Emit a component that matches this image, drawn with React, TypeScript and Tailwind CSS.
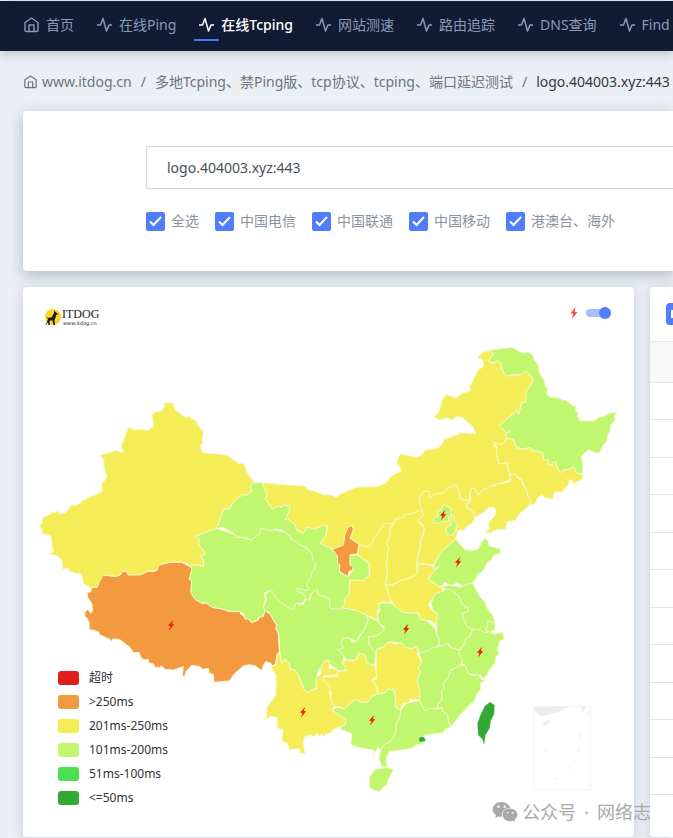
import { FaWeixin } from "react-icons/fa";

const YELLOW = "#f5ed58";
const LIME = "#c0f76e";
const ORANGE = "#f3993f";
const GREEN = "#31a932";

const navItems = ["在线Ping", "在线Tcping", "网站测速", "路由追踪", "DNS查询", "Find"];
const carriers = ["全选", "中国电信", "中国联通", "中国移动", "港澳台、海外"];

const legend = [
  { label: "超时", color: "bg-[#e21e1b]" },
  { label: ">250ms", color: "bg-[#f3993f]" },
  { label: "201ms-250ms", color: "bg-[#f5ed58]" },
  { label: "101ms-200ms", color: "bg-[#c0f76e]" },
  { label: "51ms-100ms", color: "bg-[#4be04f]" },
  { label: "<=50ms", color: "bg-[#31a932]" },
];

type Province = { name: string; fill: string; points: string };

const west: Province[] = [
  {
    name: "xinjiang",
    fill: YELLOW,
    points:
      "402,38 431,38 428,47 434,52 436,60 448,68 455,76 468,82 478,80 487,88 497,90 505,108 518,122 520,135 516,147 520,157 511,168 516,187 540,190 590,195 625,220 641,220 655,255 672,275 661,288 667,300 655,315 637,315 610,335 600,356 580,358 570,390 560,415 497,438 508,446 506,462 527,492 512,500 521,513 521,530 494,524 483,530 470,520 455,517 430,516 395,523 383,540 350,545 328,556 298,556 290,545 278,545 262,560 220,556 205,590 180,594 160,580 155,552 135,550 120,542 110,534 98,538 96,510 80,497 57,492 70,485 70,475 66,470 64,440 48,432 38,434 36,418 27,406 38,400 38,383 65,370 65,365 78,368 86,360 88,372 107,368 122,346 143,345 157,332 215,305 216,278 224,272 230,262 222,230 221,207 209,197 258,181 270,186 280,186 274,168 295,111 313,118 342,118 350,123 368,112 369,95 366,75 373,66 395,62 404,50",
  },
];

const northEast: Province[] = [
  {
    name: "neimenggu",
    fill: YELLOW,
    points:
      "-473,458 -410,464 -345,468 -335,480 -320,482 -290,494 -268,494 -253,503 -235,490 -188,471 -128,470 -102,458 -85,438 -56,422 -70,398 -59,371 -10,382 5,375 15,360 50,356 65,345 72,327 97,322 97,317 108,316 122,308 152,310 168,311 160,292 126,262 108,260 96,271 80,264 52,270 43,258 55,250 65,215 77,193 107,204 126,190 151,182 149,170 160,150 173,122 191,108 188,88 172,84 190,66 211,60 220,72 205,92 222,100 232,92 243,98 245,115 257,138 300,134 315,124 322,126 340,147 330,170 318,185 316,216 305,218 296,255 291,242 239,286 258,308 270,300 272,310 260,314 260,328 246,344 222,338 222,348 230,350 232,385 237,402 260,395 262,412 270,433 270,450 248,458 235,460 212,468 175,496 165,478 155,474 150,490 148,512 122,508 80,520 5,560 -80,640 -165,660 -200,640 -229,656 -263,656 -295,645 -300,630 -282,615 -278,590 -315,595 -340,595 -350,610 -368,600 -375,585 -405,568 -392,545 -395,528 -415,530 -442,538 -465,505 -458,495",
  },
  {
    name: "heilongjiang",
    fill: LIME,
    points:
      "211,60 275,52 310,70 325,66 340,78 344,92 355,105 356,120 365,140 375,155 376,168 383,178 380,190 390,202 415,203 428,210 437,210 460,228 470,232 466,242 475,250 473,260 482,273 525,272 535,262 555,257 570,249 592,246 583,258 586,270 582,275 572,285 570,305 562,320 560,335 550,345 538,370 520,366 505,360 485,378 488,410 487,432 475,432 468,426 462,411 445,418 430,420 422,428 412,415 407,396 399,395 396,406 386,404 385,390 371,388 368,370 355,364 335,362 330,352 310,358 290,353 280,328 260,325 257,312 270,308 271,300 258,308 239,286 291,242 296,255 305,218 316,216 318,185 330,170 340,147 322,126 315,124 308,134 280,134 257,138 245,115 243,98 232,92 222,100 205,92 220,72",
  },
  {
    name: "jilin",
    fill: YELLOW,
    points:
      "260,325 280,328 290,353 310,358 330,352 335,362 355,364 368,370 371,388 385,390 386,404 396,406 399,395 407,396 412,415 422,428 430,420 445,418 462,411 468,426 475,432 487,432 488,445 484,450 464,458 468,470 452,448 448,450 445,465 425,485 402,487 400,508 375,503 365,495 355,502 342,525 330,525 320,480 305,450 285,433 268,432 262,398 237,402 228,370 232,350 220,338 235,340 246,344",
  },
  {
    name: "liaoning",
    fill: YELLOW,
    points:
      "270,433 285,433 297,448 305,445 308,462 320,480 324,500 331,510 330,525 300,550 285,572 262,575 257,598 230,598 210,610 200,608 198,602 208,598 205,580 228,552 228,540 222,532 205,532 195,545 165,562 158,544 138,530 152,512 150,480 158,474 166,480 175,496 185,483 212,468 225,467 230,460 248,462 252,456 265,458 272,450",
  },
  {
    name: "hebei",
    fill: YELLOW,
    points:
      "5,540 -2,520 0,500 10,485 25,483 30,505 45,492 75,488 80,475 95,470 107,464 115,475 122,508 148,512 138,530 158,544 165,565 155,580 140,590 130,602 115,600 108,620 108,630 80,650 55,680 40,705 -10,700 0,655 0,630 12,610 12,590 -5,570 10,555",
  },
  {
    name: "beijing",
    fill: LIME,
    points: "72,523 82,530 95,536 92,545 95,552 86,562 85,575 70,574 60,580 42,578 40,565 55,558 50,545 62,540",
  },
  {
    name: "tianjin",
    fill: LIME,
    points: "92,556 102,558 100,570 110,580 112,590 102,612 90,616 77,608 80,590 92,586 94,572",
  },
];

const middle: Province[] = [
  {
    name: "qinghai",
    fill: LIME,
    points:
      "-70,295 -133,318 -122,326 -124,342 -103,372 -118,380 -109,393 -109,410 -136,404 -153,413 -145,425 -152,435 -152,450 -146,456 -148,490 -138,508 -125,518 -100,520 -85,532 -55,537 -30,545 2,545 10,550 15,568 25,566 35,578 52,570 55,562 70,560 75,542 70,530 76,508 72,490 80,485 95,482 110,510 128,520 140,530 160,540 170,520 185,520 200,505 225,430 225,380 150,310 60,290 30,330",
  },
  {
    name: "gansu",
    fill: LIME,
    points:
      "67,158 82,195 75,205 98,238 115,228 125,232 132,225 148,230 148,245 135,268 150,270 165,285 170,300 190,310 200,292 225,297 250,285 262,288 258,315 240,340 277,358 295,380 300,405 298,425 325,440 340,418 330,405 330,376 352,374 388,400 387,438 370,452 330,450 327,470 330,490 312,508 318,530 300,540 270,535 268,505 250,498 235,495 232,478 215,490 207,512 195,512 196,500 188,490 170,482 172,475 190,480 202,482 207,475 200,468 203,455 215,440 213,428 222,420 228,405 218,390 216,370 200,352 180,345 170,335 150,325 150,318 125,300 110,297 90,302 62,294 60,310 45,322 33,330 18,323 -10,322 -20,308 -30,305 -50,292 -70,295 -60,270 -50,238 -30,236 -20,215 7,195 25,195 37,180 31,168 42,158",
  },
  {
    name: "shaanxi",
    fill: YELLOW,
    points:
      "458,280 450,300 452,318 440,345 446,352 442,380 440,400 442,430 436,465 445,480 448,500 455,518 430,516 416,520 420,530 412,545 412,570 395,562 380,558 350,545 345,538 315,540 305,532 318,520 312,508 330,490 327,470 332,450 370,452 388,438 388,400 352,375 357,342 375,350 392,348 402,325 432,282",
  },
  {
    name: "shanxi",
    fill: YELLOW,
    points:
      "545,240 550,255 535,270 540,282 552,290 550,310 540,330 542,345 535,370 530,400 532,430 515,442 488,450 455,465 436,465 442,440 440,400 445,352 440,340 450,320 450,295 462,280 465,268 490,262 492,255 520,250 532,244",
  },
  {
    name: "henan",
    fill: YELLOW,
    points:
      "436,465 455,465 488,450 515,442 532,430 534,400 580,408 580,417 598,411 582,425 565,445 577,455 590,465 608,475 612,490 590,492 584,506 575,508 565,525 580,545 592,545 592,580 578,582 575,572 560,572 540,568 535,550 490,548 465,530 455,515 445,500 445,485",
  },
  {
    name: "ningxia",
    fill: ORANGE,
    points:
      "325,290 337,287 340,300 330,325 345,335 357,342 352,372 330,374 330,405 340,410 338,420 327,424 325,440 298,424 300,405 293,400 292,378 277,358 311,345 314,315",
  },
];

const southWest: Province[] = [
  {
    name: "xizang",
    fill: ORANGE,
    points:
      "360,80 366,88 357,118 365,122 362,158 375,178 395,190 410,190 425,202 455,207 480,215 512,215 512,222 522,228 525,238 534,236 545,248 565,240 567,232 580,230 585,212 600,222 610,240 620,255 617,265 625,280 628,335 620,345 617,372 605,378 603,370 587,365 578,380 575,392 555,377 535,374 520,378 500,395 490,405 478,423 432,427 430,403 418,400 415,385 398,388 390,380 365,376 348,395 343,412 337,405 340,380 310,390 285,388 278,380 272,378 268,385 262,380 258,386 250,372 235,368 235,358 222,360 212,352 208,338 190,338 180,322 148,298 128,297 124,305 120,298 90,285 85,275 57,268 58,250 52,235 45,230 45,215 54,208 62,220 68,213 65,190 52,170 52,157 62,156 65,142 82,142 88,125 100,105 138,110 150,105 158,94 168,94 175,105 210,105 235,94 250,95 262,90 265,76 300,67 335,67",
  },
];

const south: Province[] = [
  {
    name: "sichuan",
    fill: LIME,
    points:
      "45,32 40,20 50,0 46,-18 55,-25 65,-28 78,-5 98,10 110,20 130,30 138,10 160,15 165,0 180,0 185,-20 202,-32 205,-15 238,-5 240,25 270,28 285,25 315,30 350,45 355,60 345,85 325,110 320,125 300,115 280,113 275,125 280,143 265,150 280,165 280,185 275,190 290,205 285,212 265,212 235,190 238,180 225,182 220,195 205,210 200,235 198,265 188,270 170,278 160,265 145,225 135,210 120,208 118,190 105,178 95,190 90,160 86,100 78,85 80,75 70,60 60,40",
  },
  {
    name: "chongqing",
    fill: LIME,
    points:
      "350,45 365,55 385,62 390,75 402,85 400,97 385,105 370,110 355,110 358,135 377,160 375,195 355,195 345,180 330,162 315,180 290,180 278,165 265,150 280,143 272,128 280,113 300,115 305,125 320,125 345,85 355,60",
  },
  {
    name: "hubei",
    fill: LIME,
    points:
      "385,60 382,45 390,30 386,12 400,8 425,10 435,20 460,38 505,40 510,58 530,62 545,75 555,85 560,105 568,115 565,140 540,152 512,165 500,140 485,147 465,142 455,130 425,126 412,128 400,142 380,148 377,160 358,135 355,110 370,110 385,105 402,92 402,80 390,72",
  },
  {
    name: "anhui",
    fill: LIME,
    points:
      "543,10 550,-8 558,-20 582,-27 582,-42 605,-30 633,-3 635,12 655,25 655,34 638,40 642,60 665,88 660,110 645,125 640,138 628,150 605,145 595,130 585,140 568,138 568,115 560,105 560,68 562,38 550,35",
  },
  {
    name: "jiangsu",
    fill: LIME,
    points:
      "570,-38 600,-45 632,-38 655,-50 668,-50 690,-10 705,5 712,25 730,48 735,70 733,90 705,98 668,88 652,80 642,60 636,42 655,34 655,25 635,12 628,-10 605,-28",
  },
  { name: "shanghai", fill: LIME, points: "715,62 735,70 735,90 718,97 708,92" },
  {
    name: "zhejiang",
    fill: LIME,
    points:
      "668,88 690,90 705,98 718,95 730,102 758,97 762,120 750,122 742,150 748,162 738,170 735,190 715,212 712,225 700,235 690,225 655,222 645,195 632,190 632,175 625,155 645,130 645,120 660,110",
  },
  {
    name: "jiangxi",
    fill: LIME,
    points:
      "508,162 520,155 540,150 545,142 570,140 590,130 600,142 628,150 626,162 636,178 632,198 600,212 596,232 580,250 582,265 575,272 575,300 565,312 562,325 525,333 515,315 508,302 508,270 500,240 510,220 505,205 515,185",
  },
  {
    name: "fujian",
    fill: LIME,
    points:
      "632,197 645,195 655,222 670,228 685,223 692,236 705,240 690,252 693,268 685,275 678,285 676,300 655,318 640,335 630,345 615,365 602,382 597,368 592,345 578,335 576,322 562,325 565,312 575,300 575,272 582,265 580,250 596,232 600,212",
  },
  {
    name: "hunan",
    fill: YELLOW,
    points:
      "380,148 400,142 412,128 425,126 432,132 455,130 465,142 485,147 500,140 505,150 502,162 515,185 505,205 512,218 500,240 510,270 508,300 480,298 475,310 460,310 450,328 435,318 437,295 430,268 415,268 405,278 385,282 382,265 365,240 380,235 378,195",
  },
  {
    name: "guizhou",
    fill: YELLOW,
    points:
      "220,232 262,228 262,214 290,212 287,205 277,190 290,180 310,183 320,178 325,160 345,165 352,190 375,197 380,230 365,240 380,262 382,282 365,290 355,305 335,308 318,298 300,310 285,328 270,320 248,320 240,290 245,280 235,260 220,250",
  },
  {
    name: "guangxi",
    fill: LIME,
    points:
      "248,327 265,322 285,328 300,310 318,298 335,308 355,305 365,290 382,283 405,278 415,268 430,268 437,290 435,320 452,330 450,350 438,375 438,400 420,425 400,438 390,452 385,442 375,455 373,470 370,450 340,445 308,438 303,430 305,400 275,390 270,380 285,375 288,360 260,345",
  },
  {
    name: "guangdong",
    fill: LIME,
    points:
      "452,330 470,310 490,305 510,302 518,320 525,333 540,325 560,328 578,322 578,335 592,345 597,368 602,382 585,388 580,398 530,405 510,412 523,430 500,435 485,445 470,448 415,455 415,465 408,470 412,500 395,500 387,475 392,450 405,432 420,425 438,400 438,375 450,350",
  },
  {
    name: "yunnan",
    fill: YELLOW,
    points:
      "90,160 95,190 105,178 118,190 120,208 135,210 145,225 160,265 170,278 188,270 200,265 198,235 215,220 212,205 225,182 238,183 237,205 262,207 262,225 222,228 220,240 240,258 238,280 248,310 252,320 245,330 275,350 288,358 285,375 265,382 255,385 240,400 225,403 222,412 216,402 208,408 200,400 190,410 180,405 163,412 160,435 165,460 150,460 148,445 130,448 118,450 112,430 95,422 100,390 83,385 80,352 62,350 48,357 52,320 78,285 78,225 65,205 65,198 78,195 82,165",
  },
  {
    name: "hainan",
    fill: LIME,
    points: "375,508 400,505 412,500 418,506 432,508 422,525 412,545 412,555 400,562 390,575 370,570 358,563 358,530",
  },
  { name: "taiwan", fill: GREEN, points: "720,307 733,315 732,342 722,362 718,385 706,405 702,432 698,418 685,405 683,370 692,345 705,318" },
  { name: "hongkong", fill: GREEN, points: "507,415 515,410 523,413 526,423 510,425" },
];

function Provinces({ items, x, y }: { items: Province[]; x: number; y: number }) {
  return (
    <g transform={`translate(${x} ${y}) scale(0.33333)`} stroke="#f6f9cd" strokeWidth="3" strokeLinejoin="round">
      {items.map((p) => (
        <polygon key={p.name} fill={p.fill} stroke={p.fill === GREEN ? GREEN : undefined} strokeWidth={p.fill === GREEN ? 1 : undefined} points={p.points} />
      ))}
    </g>
  );
}

const bolts = [
  [443, 515],
  [458, 562],
  [406, 629],
  [480, 652],
  [372, 720],
  [303, 712],
  [171, 625],
];

function ChinaMap() {
  return (
    <svg viewBox="23 337 611 490" className="block w-full" role="img" aria-label="中国地图">
      <Provinces items={northEast} x={420} y={330} />
      <polygon
        fill={LIME}
        stroke="#f6f9cd"
        points="428,579 433,572 434,565 441,552 449,545 456,539 461,545 464,549 471,551 478,549 482,542 485,538 488,541 489,546 494,547 500,549 501,553 494,555 492,559 487,563 483,571 478,574 475,580 469,585 463,586 457,583 451,586 445,582 440,588 434,584"
      />
      <Provinces items={west} x={30} y={390} />
      <Provinces items={middle} x={240} y={430} />
      <Provinces items={southWest} x={70} y={540} />
      <Provinces items={south} x={250} y={600} />
      <g fill="#ececec">
        <rect x="533.5" y="706.5" width="57" height="83" fill="none" stroke="#f4f4f4" />
        <path d="M534 708 L537 706.500 H570 L557 712.500 L544 716 L539 715 L534 710 Z" />
        <path d="M544 722 L550 719.500 L548 725 L543 726 Z M581 707 H586 L583 712 Z M579 732 l1 0 v5 l-1 1 Z M577 751 l3 -4 v3 l-3 2 Z M539 764 l2 6 -1 -1 Z M568 768 l3 -3 -3 5 Z M545 751 l4 -3 -3 4 Z M555 779 l4 -1 -3 2 Z" />
        <path d="M587 716 l3 -5" stroke="#f0f0f0" />
        <path d="M510 696 l2 -1 v1 Z" />
      </g>
      {bolts.map(([x, y]) => (
        <path key={`${x}-${y}`} fill="#f0230f" transform={`translate(${x} ${y})`} d="M2.500 -5.500 L-3 0.500 L-0.600 1 L-2 5.500 L3.200 -0.800 L0.800 -1.300 Z" />
      ))}
    </svg>
  );
}

function Logo() {
  return (
    <svg width="60" height="20" viewBox="43 307 60 20" role="img" aria-label="ITDOG">
      <circle cx="53" cy="317" r="8" fill="#fbd234" />
      <path
        fill="#1d1a16"
        d="M54.500 310.500 L55.500 312 L58.500 314.300 L56 315 L55.500 318 L54.500 320 L55 325 H53.500 L52.500 320.500 L50 320.500 L49.500 322 L50 325 H48.500 L48 322 L46 325 L45.500 325 L48 319.500 L47 317 L48.500 318 L52 317 L53.500 314 Z"
      />
      <text x="62" y="318" fontSize="12" fill="#2b2220" fontFamily="'Liberation Serif', serif">ITDOG</text>
      <text x="63" y="325" fontSize="5" fill="#2b2220" fontFamily="'DejaVu Sans', sans-serif">www.itdog.cn</text>
    </svg>
  );
}

function HomeIcon({ className }: { className: string }) {
  return (
    <svg viewBox="0 0 15 16" className={className} fill="none" stroke="currentColor" strokeWidth="1.4" strokeLinejoin="round" aria-hidden="true">
      <path d="M1 5.500 L7.500 1 L14 5.500 V13 Q14 14.500 12.500 14.500 H2.500 Q1 14.500 1 13 Z" />
      <path d="M5 14.500 V8 H10 V14.500" />
    </svg>
  );
}

function PulseIcon() {
  return (
    <svg viewBox="0 0 15 16" className="h-4 w-[15px] shrink-0" fill="none" stroke="currentColor" strokeWidth="1.5" strokeLinejoin="round" aria-hidden="true">
      <path d="M0 8 H3.500 L6 1.500 L9.500 14 L12 8 H15" />
    </svg>
  );
}

export default function App() {
  return (
    <div className="relative w-full overflow-hidden bg-[#ebeef3] pb-px font-['Noto_Sans','Noto_Sans_CJK_SC',sans-serif] text-sm text-[#6c757d]">
      <nav className="mt-px flex h-[50px] items-center gap-[23px] whitespace-nowrap bg-[#111c34] pb-0.5 pl-6 text-[#8b99b5] shadow-[0_3px_10px_rgba(80,100,110,0.3)]">
        <a href="#home" className="flex shrink-0 items-center gap-[7px]">
          <HomeIcon className="h-4 w-[15px]" />
          首页
        </a>
        {navItems.map((item) => {
          const active = item === "在线Tcping";
          return (
            <a
              key={item}
              href={`#${item}`}
              className={active ? "relative flex shrink-0 items-center gap-[7px] font-medium text-white" : "flex shrink-0 items-center gap-[7px]"}
            >
              <PulseIcon />
              {item}
              {active && <span className="absolute -bottom-1.5 -left-[5px] h-0.5 w-[25px] bg-[#4a7bf5]" />}
            </a>
          );
        })}
      </nav>

      <div className="flex h-[60px] items-center gap-[9px] whitespace-nowrap pl-6 pt-0.5">
        <a href="#site" className="flex items-center gap-[5px]">
          <HomeIcon className="h-[14px] w-[13px]" />
          www.itdog.cn
        </a>
        <span>/</span>
        <a href="#tcping">多地Tcping、禁Ping版、tcp协议、tcping、端口延迟测试</a>
        <span>/</span>
        <span className="text-[#333a41]">logo.404003.xyz:443</span>
      </div>

      <section className="ml-[23px] h-40 rounded-l bg-white pl-[123px] pt-[35px] shadow-[0_4px_14px_rgba(70,90,110,0.35)]">
        <input
          aria-label="域名"
          defaultValue="logo.404003.xyz:443"
          className="block h-[43px] w-full rounded-l-[3px] border border-r-0 border-[#ced4da] bg-white pl-5 text-[#495057] outline-none"
        />
        <div className="mt-[22px] flex gap-4 whitespace-nowrap text-[#8a949e]">
          {carriers.map((name) => (
            <label key={name} className="flex shrink-0 items-center gap-1.5">
              <span className="relative size-[19px]">
                <input type="checkbox" defaultChecked className="block size-[19px] appearance-none rounded-[2px] bg-[#4f7dfb]" />
                <svg viewBox="0 0 19 19" className="pointer-events-none absolute inset-0" fill="none" stroke="#fff" strokeWidth="2" aria-hidden="true">
                  <path d="M4 9.500 L7.500 13 L15 5" />
                </svg>
              </span>
              {name}
            </label>
          ))}
        </div>
      </section>

      <div className="mt-4 flex gap-4 pl-[23px]">
        <section className="relative min-w-0 flex-1 rounded bg-white pb-2.5 shadow-[0_2px_12px_rgba(70,90,120,0.2)]">
          <header className="flex h-[50px] items-start justify-between pl-5 pr-[23px] pt-5">
            <Logo />
            <label className="flex h-3 items-center gap-2">
              <svg width="8" height="12" viewBox="0 0 8 12" fill="#fb4e4e" aria-label="闪电">
                <path d="M5.500 0 L0.500 6.500 H3.200 L2.200 12 L7.500 5 H4.700 Z" />
              </svg>
              <input
                type="checkbox"
                defaultChecked
                className="relative h-3 w-[25px] appearance-none before:absolute before:left-0 before:top-0.5 before:h-2 before:w-5 before:rounded-full before:bg-[#a9bffb] after:absolute after:right-0 after:top-0 after:size-3 after:rounded-full after:bg-[#4f7dfb]"
              />
            </label>
          </header>
          <ChinaMap />
          <ul className="absolute bottom-[27px] left-[35px] text-xs text-[#333]">
            {legend.map((item) => (
              <li key={item.label} className="flex h-6 items-center gap-2.5">
                <span className={`h-[14px] w-[21px] rounded-[3px] ${item.color}`} />
                {item.label}
              </li>
            ))}
          </ul>
        </section>

        <aside className="w-[23px] shrink-0 overflow-hidden rounded-l bg-white shadow-[0_2px_12px_rgba(70,90,120,0.2)]">
          <div className="h-[54px] pl-4 pt-4">
            <button aria-label="筛选" className="flex h-[22px] w-12 items-center rounded bg-[#4f7dfb] pl-[5px]">
              <span className="h-2 w-3 border-2 border-white" />
            </button>
          </div>
          <div className="h-[42px] border-y border-[#e3e7ed] bg-[#f8f8f9]" />
          {Array.from({ length: 11 }, (_, i) => (
            <div key={i} className="h-[37px] border-b border-[#dee2e9] even:h-[38px]" />
          ))}
        </aside>
      </div>

      <div className="absolute bottom-3 right-[22px] flex items-center gap-1 whitespace-nowrap text-lg text-[#a9a9a9]">
        <FaWeixin className="size-[26px]" />
        <span className="flex gap-2">
          <span>公众号</span>
          <span>·</span>
          <span>网络志</span>
        </span>
      </div>
    </div>
  );
}
